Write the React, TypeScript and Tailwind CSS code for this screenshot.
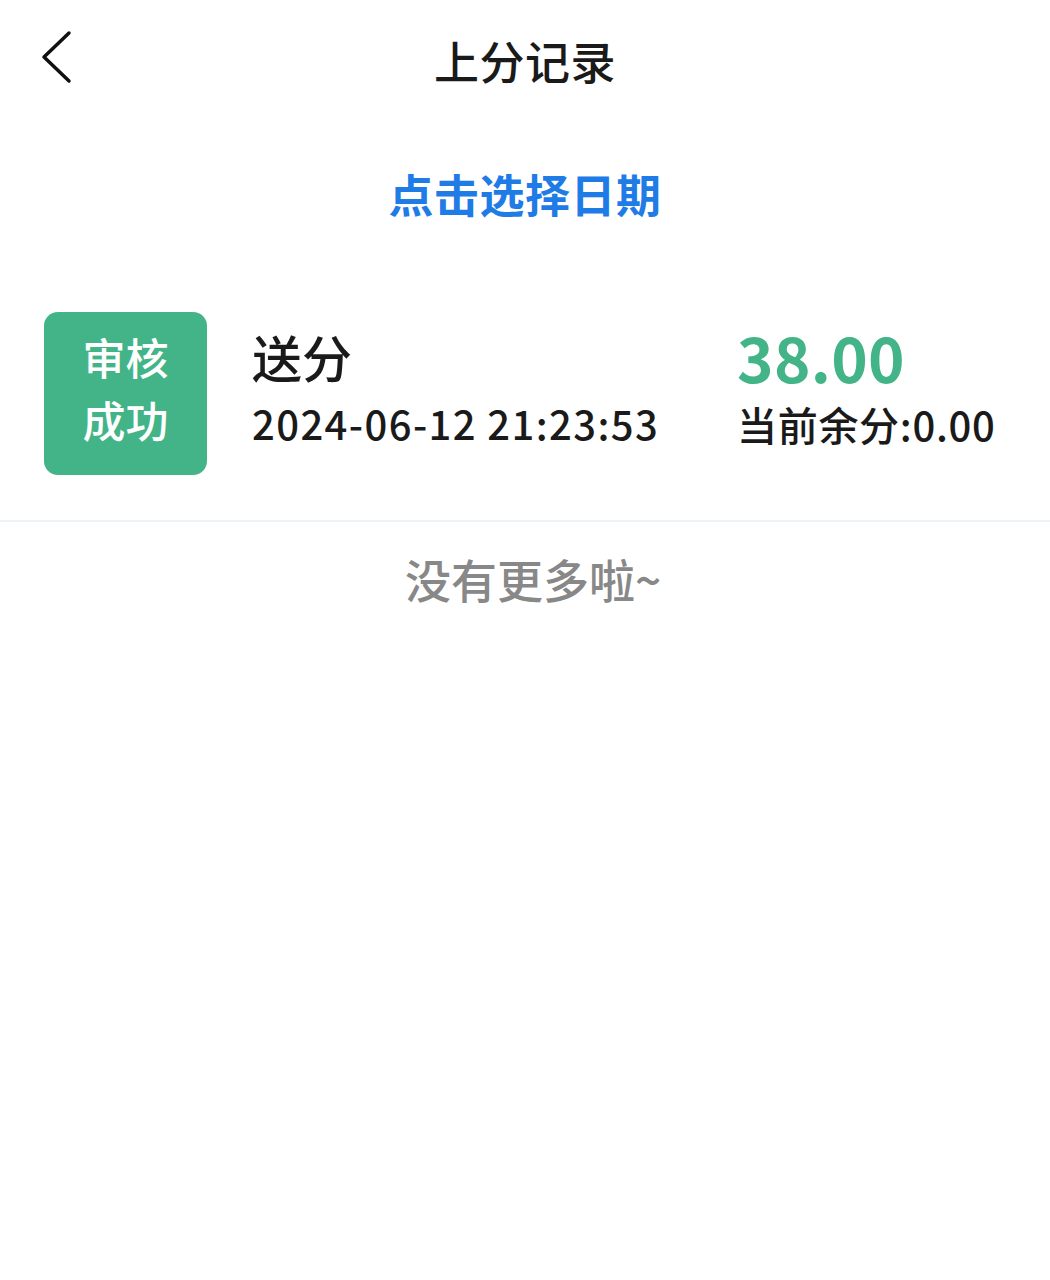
import React from "react";

export default function App() {
  const font = { fontFamily: '"Noto Sans CJK SC", "Noto Sans", sans-serif' };
  return (
    <div className="w-[1050px] h-[1280px] bg-white text-[#1a1a1a]" style={font}>
      <div className="relative h-[125px] flex items-center justify-center">
        <svg className="absolute left-[38px] top-[30px]" width="36" height="54" viewBox="0 0 36 54" fill="none">
          <path d="M31 3 L6 27 L31 51" stroke="#111" strokeWidth="3.5" strokeLinecap="round" strokeLinejoin="round" />
        </svg>
        <div className="text-[45px] font-medium leading-none -mt-[4px] tracking-[0.5px]">上分记录</div>
      </div>
      <div className="flex justify-center pt-[46px]">
        <div className="text-[45px] font-bold text-[#1f7be6] leading-none tracking-[0.5px]">点击选择日期</div>
      </div>
      <div className="flex items-center pl-[44px] mt-[96px] h-[163px]">
        <div className="w-[163px] h-[163px] rounded-[14px] bg-[#43b488] flex flex-col items-center justify-center text-white text-[43px] font-medium leading-[63px] pb-[11px]">
          <div>审核</div>
          <div>成功</div>
        </div>
        <div className="ml-[45px] flex flex-col">
          <div className="text-[50px] font-medium leading-none mt-[-13px]">送分</div>
          <div className="text-[40px] font-medium leading-none mt-[22px] tracking-[1.4px]">2024-06-12 21:23:53</div>
        </div>
        <div className="ml-auto flex flex-col w-[313px]">
          <div className="text-[62px] font-bold text-[#43b488] leading-none mt-[-18px] tracking-[0.3px]">38.00</div>
          <div className="text-[40px] font-medium leading-none mt-[17px] tracking-[0.7px]">当前余分:0.00</div>
        </div>
      </div>
      <div className="mt-[45px] h-[2px] bg-[#eef3f7]" />
      <div className="flex justify-center pt-[33px] pl-[16px]">
        <div className="text-[46px] font-medium text-[#888888] leading-none">没有更多啦~</div>
      </div>
    </div>
  );
}
